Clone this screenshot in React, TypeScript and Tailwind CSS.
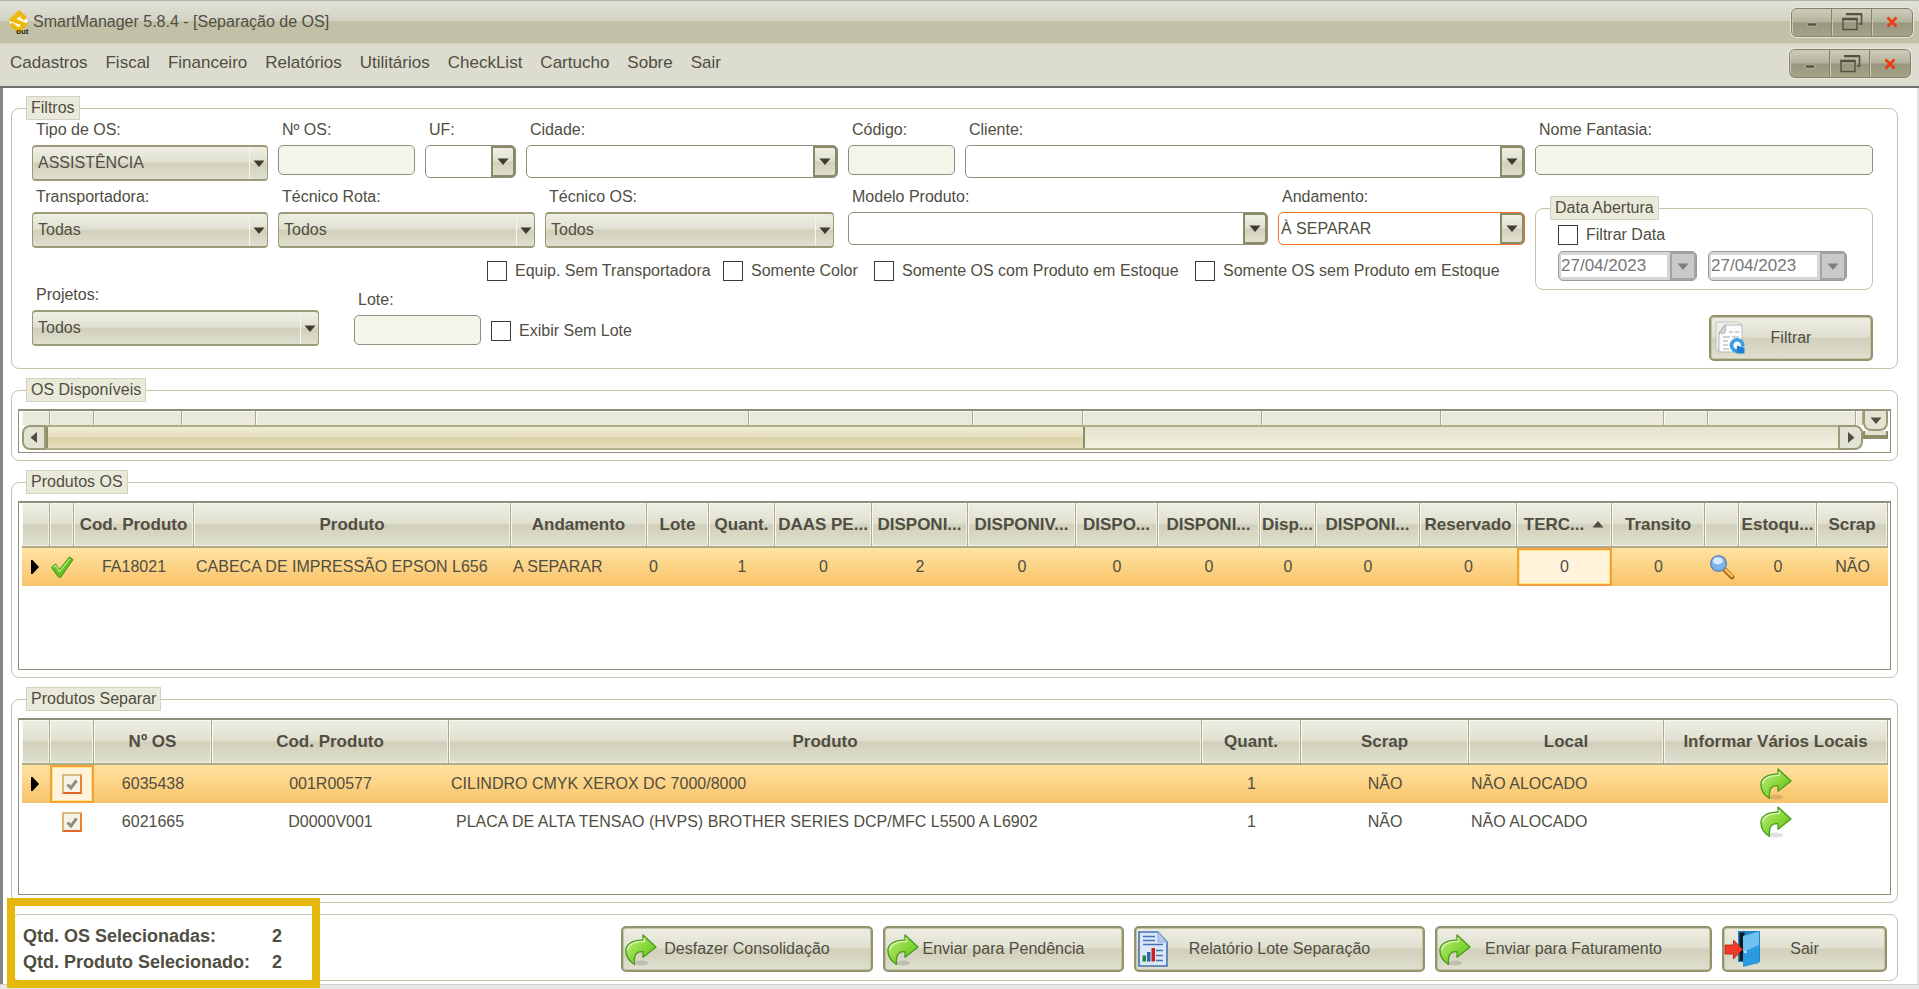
import { useId, useState } from "react";
import type { ReactNode } from "react";

const MENU = ["Cadastros", "Fiscal", "Financeiro", "Relatórios", "Utilitários", "CheckList", "Cartucho", "Sobre", "Sair"];

const FACE = "bg-[linear-gradient(180deg,#eeeee3_0%,#e1e1d2_46%,#d0d0bb_52%,#e0e0d0_100%)]";
const HEAD_CELL = `${FACE} border-r border-b-2 border-[#adab88] p-0 text-[17px] font-bold shadow-[inset_1px_1px_0_#f8f8f2,inset_-1px_-1px_0_#f0f0e6] whitespace-nowrap overflow-hidden`;
const SELECTED_ROW = "bg-[linear-gradient(180deg,#ffe3a3_0%,#fcd182_55%,#f8c46a_100%)]";
const ACTIVE_CELL = "bg-[#fff3dc] shadow-[inset_0_0_0_2px_#f3a03c,inset_0_0_0_3px_#ffe680]";

function Caret({ className = "" }: { className?: string }) {
  return (
    <svg viewBox="0 0 12 7" className={`w-3 h-[7px] ${className}`} fill="currentColor">
      <path d="M0.5 0.5h11L6 7z" />
    </svg>
  );
}

function GreenArrow({ className = "" }: { className?: string }) {
  const id = useId();
  return (
    <svg viewBox="0 0 32 32" className={`w-8 h-8 ${className}`}>
      <defs>
        <linearGradient id={id} x1="0" y1="0" x2="1" y2="1">
          <stop offset="0" stopColor="#c9f08c" />
          <stop offset="0.5" stopColor="#8ad83c" />
          <stop offset="1" stopColor="#58b81c" />
        </linearGradient>
      </defs>
      <ellipse cx="16" cy="29" rx="7" ry="2.4" fill="#000" opacity="0.12" />
      <path
        d="M18 1 31 13 18 23.3V17.6C11.4 17 8.6 20.8 9.5 30.5 4 27 .9 22 .9 16.6.9 9.8 8 5.9 18 6.2Z"
        fill={`url(#${id})`}
        stroke="#4a9a1c"
        strokeWidth="1.3"
        strokeLinejoin="round"
      />
      <path d="M19.2 3.8v3.8C10 7.2 3 10.5 2.6 16" fill="none" stroke="#e6fac8" strokeWidth="1.1" />
    </svg>
  );
}

function ReportIcon({ className = "" }: { className?: string }) {
  return (
    <svg viewBox="0 0 30 36" className={`w-[30px] h-9 ${className}`}>
      <path d="M1 1h19l9 10v24H1z" fill="#dbe7f6" stroke="#4673b4" strokeWidth="1.6" />
      <path d="M20 1v10h9z" fill="#b4cbea" stroke="#7fa2d2" strokeWidth="0.8" />
      <path d="M5 5.500h12M5 9.500h12M5 13.500h20M18 19.500h7M18 24.500h7M18 29.500h7" stroke="#4673b4" strokeWidth="1.6" />
      <path d="M4.500 24.500h3.500v6H4.500z" fill="#1f8a2b" />
      <path d="M9 21h3.500v9.500H9z" fill="#2f63b4" />
      <path d="M13.500 17h3.500v13.500h-3.500z" fill="#cf2020" />
    </svg>
  );
}

function DoorIcon({ className = "" }: { className?: string }) {
  return (
    <svg viewBox="0 0 37 38" className={`w-[37px] h-[38px] ${className}`}>
      <path d="M14 1h22v31H14z" fill="#1f86c8" />
      <path d="M15.500 2.500h5V31h-5z" fill="#101820" />
      <path d="M19 6 35 1.500V33L19 37z" fill="#2b9be0" />
      <path d="M19 6 35 1.500V15L19 22z" fill="#6fc0ef" />
      <circle cx="21.500" cy="22" r="1.2" fill="#eaf6ff" />
      <path d="M1 15h8.500V10L18.500 19.500 9.500 29v-5H1z" fill="#f23a28" stroke="#b81d12" strokeWidth="0.8" />
    </svg>
  );
}

function FilterIcon({ className = "" }: { className?: string }) {
  return (
    <svg viewBox="0 0 30 33" className={`w-[30px] h-[33px] ${className}`}>
      <path d="M1 1h22l3 2v26H1z" fill="#ededed" stroke="#bdbdbd" strokeWidth="0.8" />
      <path d="M10 4h17v27H4V12z" fill="#fbfbfb" stroke="#b5b5b5" />
      <path d="M10 4c1 3 1 6-.5 8-1.500.5-3.500.3-5.500 0z" fill="#d6d6d6" stroke="#9c9c9c" strokeWidth="0.8" />
      <path d="M14 11h4M20 11h4M8 16h7M17 16h7M8 20h5M8 24h5M8 28h6" stroke="#c4c4c4" strokeWidth="1.3" />
      <path d="M23.500 29.800A5.600 5.600 0 1 1 27.600 25.500" fill="none" stroke="#3a9de6" strokeWidth="3.6" />
      <path d="M22 24.500 29.500 27V32.500H21.500z" fill="#1f7fd0" />
    </svg>
  );
}

function CheckMark() {
  return (
    <svg viewBox="0 0 24 24" className="w-6 h-6 mx-auto">
      <path d="M1.500 12.500 5.500 9l4 5.500L19.500 2l3.500 2.500L10.500 22.500 8.500 22z" fill="#63c224" stroke="#3d8f14" strokeLinejoin="round" />
      <path d="M3.500 12 5.500 10.700l4 6L20 3.500" fill="none" stroke="#b5f07a" strokeWidth="1.2" />
    </svg>
  );
}

function Magnifier() {
  return (
    <svg viewBox="0 0 26 26" className="w-[26px] h-[26px] mx-auto">
      <path d="M14.500 14.500 23 23" stroke="#a8641c" strokeWidth="4.6" strokeLinecap="round" />
      <path d="M16.500 15.800 23 22.200" stroke="#f6c25a" strokeWidth="2.4" strokeLinecap="round" />
      <circle cx="9.500" cy="9.500" r="7.8" fill="#7db4ef" stroke="#6c87b8" strokeWidth="1.6" />
      <ellipse cx="8.800" cy="6.800" rx="5" ry="3.6" fill="#d9ecff" />
    </svg>
  );
}

function AppLogo() {
  return (
    <svg viewBox="0 0 22 24" className="w-[22px] h-6">
      <path d="M11 1 20 11 11 23 1 12z" fill="#fffbe6" />
      <path d="M11 0 19 7 16 10.500 11.500 6.500 8.500 9 20 14 11 23.500 1.500 15.500 4.500 12.500 10.500 17.500 13 15 0 10.500z" fill="#edb90f" />
      <text x="8" y="23.500" fontSize="8" fontWeight="700" fill="#2a2410" fontFamily="Liberation Sans, sans-serif">out</text>
    </svg>
  );
}

function WindowButtons({ target }: { target: string }) {
  const btn = "flex items-center justify-center w-10 h-[27px] border-r border-[#85836a] last:border-r-0 shadow-[inset_1px_1px_0_#c9c8b4]";
  return (
    <div className="flex rounded-md overflow-hidden border border-[#85836a] ring-1 ring-[#e6e6da] bg-[linear-gradient(180deg,#cfcebf_0%,#b3b29b_48%,#98967c_52%,#a5a388_100%)]">
      <button type="button" aria-label={`Minimizar ${target}`} className={btn}>
        <svg viewBox="0 0 10 10" className="w-2.5 h-2.5"><path d="M0.500 6h9v3h-9z" fill="#54523f" stroke="#d5d4c3" strokeWidth="0.5" /></svg>
      </button>
      <button type="button" aria-label={`Restaurar ${target}`} className={btn}>
        <svg viewBox="0 0 22 20" className="w-[22px] h-5" fill="none" stroke="#54523f">
          <path d="M5 2.500h15.500V12H18" strokeWidth="1.6" />
          <path d="M5 2h16" strokeWidth="2.2" />
          <path d="M2 7h14v10.500H2z" strokeWidth="1.4" />
          <path d="M1.300 7h15.400" strokeWidth="2.6" />
        </svg>
      </button>
      <button type="button" aria-label={`Fechar ${target}`} className={btn}>
        <svg viewBox="0 0 12 12" className="w-3 h-3"><path d="M1.500 1.500 10.500 10.500M10.500 1.500 1.500 10.500" stroke="#ee3a10" strokeWidth="2.6" /></svg>
      </button>
    </div>
  );
}

function Group({ title, className = "", legendClass = "ml-3.5", children }: { title?: string; className?: string; legendClass?: string; children: ReactNode }) {
  return (
    <fieldset className={`min-w-0 border border-[#c6c5ab] rounded-lg ${className}`}>
      {title && (
        <legend className={`h-6 px-1 leading-[21px] bg-[#eaeadb] border border-[#d3d2bd] ${legendClass}`}>{title}</legend>
      )}
      {children}
    </fieldset>
  );
}

interface FieldProps {
  label: string;
  className?: string;
  options?: string[];
  active?: boolean;
}

function TextField({ label, className = "" }: FieldProps) {
  const id = useId();
  return (
    <div className={className}>
      <label htmlFor={id} className="block h-5 mb-[5px] pl-1 leading-5">{label}</label>
      <input id={id} type="text" className="block w-full h-[30px] px-1 rounded-[5px] border border-[#8f8e7a] bg-[#f5f5ec]" />
    </div>
  );
}

// flat drop-down list
function DropDown({ label, className = "", options = [] }: FieldProps) {
  const id = useId();
  return (
    <div className={className}>
      <label htmlFor={id} className="block h-5 mb-[5px] pl-1 leading-5">{label}</label>
      <div className="relative">
        <select id={id} className={`block w-full h-9 pl-[5px] pr-6 appearance-none rounded-[4px] border border-y-2 border-[#9c9a76] ${FACE}`}>
          {options.map(o => <option key={o}>{o}</option>)}
        </select>
        <span className="absolute right-px inset-y-0.5 w-[18px] flex items-center justify-center border-l border-[#f6f6ee] pointer-events-none">
          <Caret className="text-[#3e3c2c]" />
        </span>
      </div>
    </div>
  );
}

// editable style combo with a raised button at the right
function Combo({ label, className = "", options = [""], active = false }: FieldProps) {
  const id = useId();
  return (
    <div className={className}>
      <label htmlFor={id} className="block h-5 mb-[5px] pl-1 leading-5">{label}</label>
      <div className="relative">
        <select
          id={id}
          className={`block w-full h-[33px] pl-0.5 pr-7 appearance-none rounded-[5px] border bg-white ${active ? "border-[#e8742c]" : "border-[#8f8e7a]"}`}
        >
          {options.map(o => <option key={o}>{o}</option>)}
        </select>
        <span className={`absolute right-px inset-y-px w-6 flex items-center justify-center rounded-r border-2 border-[#8b8a66] pointer-events-none ${FACE}`}>
          <Caret className="text-[#3e3c2c]" />
        </span>
      </div>
    </div>
  );
}

function CheckField({ label, className = "" }: { label: string; className?: string }) {
  return (
    <label className={`flex items-center gap-2 h-5 whitespace-nowrap ${className}`}>
      <input type="checkbox" className="w-5 h-5 shrink-0 appearance-none border border-[#3a3a3a] bg-white checked:bg-[#8b8a66]" />
      {label}
    </label>
  );
}

function DateField({ label }: { label: string }) {
  return (
    <div className="flex w-[139px] h-[30px] rounded-[5px] border border-[#9b9b9b] bg-[#d6d6d6] overflow-hidden">
      <input type="text" aria-label={label} disabled defaultValue="27/04/2023" className="min-w-0 flex-1 my-[3px] ml-0.5 mr-[3px] bg-white text-[17px] text-[#77777a]" />
      <button type="button" aria-label={`Abrir ${label}`} disabled className="w-[26px] flex items-center justify-center border-2 border-[#a3a3a3] bg-[#c9c9c9]">
        <Caret className="text-[#808080]" />
      </button>
    </div>
  );
}

function ActionButton({ className = "", icon, children }: { className?: string; icon: ReactNode; children: ReactNode }) {
  return (
    <button type="button" className={`relative h-[46px] rounded-[5px] border-2 border-[#93926c] shadow-[inset_0_0_0_1px_#c6c5a4] text-center ${FACE} ${className}`}>
      {icon}
      {children}
    </button>
  );
}

function GridCheck({ label }: { label: string }) {
  const [checked, setChecked] = useState(true);
  return (
    <span className="relative block w-5 h-5 mx-auto">
      <input
        type="checkbox"
        aria-label={label}
        checked={checked}
        onChange={e => setChecked(e.target.checked)}
        className="block w-5 h-5 appearance-none border-2 border-t-[#d9bd84] border-l-[#dcb676] border-r-[#e88430] border-b-[#e0662a] bg-[#f6f3e4]"
      />
      {checked && (
        <svg viewBox="0 0 20 20" className="absolute inset-0 w-5 h-5 pointer-events-none">
          <path d="M5.500 10.500 9 14l5.500-7.500" fill="none" stroke="#8e8e84" strokeWidth="3" />
        </svg>
      )}
    </span>
  );
}

function RowMarker() {
  return (
    <svg viewBox="0 0 8 14" className="w-2 h-3.5 ml-[9px]"><path d="M0 0h1.500L8 7 1.500 14H0z" fill="#000" /></svg>
  );
}

const OS_COLS = [
  { head: "", width: "w-7" },
  { head: "", width: "w-6" },
  { head: "Cod. Produto", width: "w-[120px]" },
  { head: "Produto", width: "" },
  { head: "Andamento", width: "w-[136px]" },
  { head: "Lote", width: "w-[62px]" },
  { head: "Quant.", width: "w-[66px]" },
  { head: "DAAS PE...", width: "w-[97px]" },
  { head: "DISPONI...", width: "w-24" },
  { head: "DISPONIV...", width: "w-[108px]" },
  { head: "DISPO...", width: "w-[82px]" },
  { head: "DISPONI...", width: "w-[102px]" },
  { head: "Disp...", width: "w-14" },
  { head: "DISPONI...", width: "w-[104px]" },
  { head: "Reservado", width: "w-[97px]" },
  { head: "TERC...", width: "w-[95px]", sorted: true },
  { head: "Transito", width: "w-[93px]" },
  { head: "", width: "w-[34px]" },
  { head: "Estoqu...", width: "w-[78px]" },
  { head: "Scrap", width: "w-[71px]" },
];

const SEPARAR_COLS = [
  { head: "", width: "w-7" },
  { head: "", width: "w-11" },
  { head: "Nº OS", width: "w-[118px]" },
  { head: "Cod. Produto", width: "w-[237px]" },
  { head: "Produto", width: "" },
  { head: "Quant.", width: "w-[99px]" },
  { head: "Scrap", width: "w-[168px]" },
  { head: "Local", width: "w-[195px]" },
  { head: "Informar Vários Locais", width: "w-[224px]" },
];

const SEPARAR_ROWS = [
  { os: "6035438", cod: "001R00577", produto: "CILINDRO CMYK XEROX DC 7000/8000", selected: true },
  { os: "6021665", cod: "D0000V001", produto: "PLACA DE ALTA TENSAO (HVPS) BROTHER SERIES DCP/MFC L5500 A L6902", selected: false },
];

const DISPONIVEIS_COLS = ["w-7", "w-11", "w-[88px]", "w-[74px]", "", "w-[224px]", "w-[110px]", "w-[179px]", "w-[179px]", "w-[223px]", "w-11", "w-[148px]", "w-[7px]"];

const GRID_BOX = "border border-t-2 border-[#8f8e76] pl-[3px] pr-0.5 bg-white";

function ProdutosOs() {
  return (
    <div className={`${GRID_BOX} min-h-[169px]`}>
      <table className="w-full table-fixed border-separate border-spacing-0">
        <thead>
          <tr className="h-[45px]">
            {OS_COLS.map((c, i) => (
              <th key={i} className={`${HEAD_CELL} ${c.width}`}>
                {c.sorted ? (
                  <span className="flex items-center justify-center gap-2">
                    {c.head}
                    <Caret className="rotate-180" />
                  </span>
                ) : c.head}
              </th>
            ))}
          </tr>
        </thead>
        <tbody>
          <tr className={`h-[38px] text-center whitespace-nowrap ${SELECTED_ROW}`}>
            <td><RowMarker /></td>
            <td><CheckMark /></td>
            <td>FA18021</td>
            <td className="pl-0.5 text-left">CABECA DE IMPRESSÃO EPSON L656</td>
            <td className="pl-0.5 text-left">A SEPARAR</td>
            <td className="pl-0.5 text-left">0</td>
            <td>1</td>
            <td>0</td>
            <td>2</td>
            <td>0</td>
            <td>0</td>
            <td>0</td>
            <td>0</td>
            <td>0</td>
            <td>0</td>
            <td className={ACTIVE_CELL}>0</td>
            <td>0</td>
            <td><Magnifier /></td>
            <td>0</td>
            <td>NÃO</td>
          </tr>
        </tbody>
      </table>
    </div>
  );
}

function ProdutosSeparar() {
  return (
    <div className={`${GRID_BOX} min-h-[177px]`}>
      <table className="w-full table-fixed border-separate border-spacing-0">
        <thead>
          <tr className="h-[45px]">
            {SEPARAR_COLS.map((c, i) => <th key={i} className={`${HEAD_CELL} ${c.width}`}>{c.head}</th>)}
          </tr>
        </thead>
        <tbody>
          {SEPARAR_ROWS.map(r => (
            <tr key={r.os} className={`h-[38px] text-center whitespace-nowrap ${r.selected ? SELECTED_ROW : ""}`}>
              <td>{r.selected && <RowMarker />}</td>
              <td className={r.selected ? ACTIVE_CELL : ""}><GridCheck label={`Selecionar ${r.os}`} /></td>
              <td>{r.os}</td>
              <td>{r.cod}</td>
              <td className={`text-left ${r.selected ? "pl-0.5" : "pl-[7px]"}`}>{r.produto}</td>
              <td>1</td>
              <td>NÃO</td>
              <td className="pl-0.5 text-left">NÃO ALOCADO</td>
              <td>
                <button type="button" aria-label={`Informar vários locais ${r.os}`} className="block mx-auto"><GreenArrow /></button>
              </td>
            </tr>
          ))}
        </tbody>
      </table>
    </div>
  );
}

function OsDisponiveis() {
  const btn = "flex items-center justify-center border-2 border-[#9c9a76] bg-[#e3e3d3]";
  return (
    <div className={`${GRID_BOX} flex h-11`}>
      <div className="min-w-0 flex-1">
        <table className="w-full table-fixed border-separate border-spacing-0">
          <tbody>
            <tr className="h-3.5">
              {DISPONIVEIS_COLS.map((w, i) => (
                <td key={i} className={`p-0 bg-[#e9e9dc] border-r border-[#adab88] shadow-[inset_1px_1px_0_#f8f8f2] ${w}`} />
              ))}
            </tr>
          </tbody>
        </table>
        <div className="flex h-[25px]">
          <button type="button" aria-label="Rolar para a esquerda" className={`${btn} w-6 rounded-l-lg`}>
            <Caret className="rotate-90" />
          </button>
          <div className="flex-1 border-y-2 border-[#b0ae86] bg-[linear-gradient(180deg,#e3e3ce_0%,#f1f1df_100%)]">
            <div className="w-[58%] h-full border-x-2 border-[#8f8d65] bg-[linear-gradient(180deg,#efecd5_0%,#e6e0bf_45%,#dad1a6_52%,#e6dfc0_100%)]" />
          </div>
          <button type="button" aria-label="Rolar para a direita" className={`${btn} w-[25px] rounded-r-lg`}>
            <Caret className="-rotate-90" />
          </button>
        </div>
      </div>
      <div className="w-[25px]">
        <button type="button" aria-label="Rolar para baixo" className={`${btn} w-full h-5 rounded-b-lg border-t-0`}>
          <Caret />
        </button>
        <div className="h-2 border-x-2 border-b-4 border-[#8f8d65] bg-[#e3e3d3]" />
      </div>
    </div>
  );
}

function Filtros() {
  return (
    <Group title="Filtros" className="pb-[7px]">
      <div className="flex gap-2.5 pl-5 pr-6">
        <div className="min-w-0 flex-1">
          <div className="flex items-start gap-2.5">
            <DropDown label="Tipo de OS:" options={["ASSISTÊNCIA"]} className="w-[236px]" />
            <TextField label="Nº OS:" className="w-[137px]" />
            <Combo label="UF:" className="w-[91px]" />
            <Combo label="Cidade:" className="w-[312px]" />
            <TextField label="Código:" className="w-[107px]" />
            <Combo label="Cliente:" className="min-w-0 flex-1" />
          </div>
          <div className="flex items-start gap-2.5 mt-1.5">
            <DropDown label="Transportadora:" options={["Todas"]} className="w-[236px]" />
            <DropDown label="Técnico Rota:" options={["Todos"]} className="w-[257px]" />
            <DropDown label="Técnico OS:" options={["Todos"]} className="w-[289px] mr-1" />
            <Combo label="Modelo Produto:" className="min-w-0 flex-1" />
            <Combo label="Andamento:" options={["À SEPARAR"]} active className="w-[247px]" />
          </div>
          <div className="flex mt-[13px] pl-[455px]">
            <CheckField label="Equip. Sem Transportadora" className="w-[236px]" />
            <CheckField label="Somente Color" className="w-[151px]" />
            <CheckField label="Somente OS com Produto em Estoque" className="w-[321px]" />
            <CheckField label="Somente OS sem Produto em Estoque" />
          </div>
          <div className="flex items-start mt-1">
            <DropDown label="Projetos:" options={["Todos"]} className="w-[287px]" />
            <TextField label="Lote:" className="w-[127px] ml-[35px] mt-[5px]" />
            <CheckField label="Exibir Sem Lote" className="ml-2.5 mt-9" />
          </div>
        </div>
        <div className="w-[338px] flex flex-col">
          <TextField label="Nome Fantasia:" />
          <Group title="Data Abertura" className="mt-[21px] pl-[22px] pb-2" legendClass="-ml-2">
            <CheckField label="Filtrar Data" className="mt-[5px]" />
            <div className="flex gap-[11px] mt-1.5">
              <DateField label="Data inicial" />
              <DateField label="Data final" />
            </div>
          </Group>
          <ActionButton className="w-[164px] mt-[25px] self-end" icon={<FilterIcon className="absolute left-1 top-1" />}>Filtrar</ActionButton>
        </div>
      </div>
    </Group>
  );
}

export default function App() {
  return (
    <div className="min-h-screen flex flex-col bg-[#e9e9e9] font-['Liberation_Sans',Arial,sans-serif] text-[16px] leading-5 text-[#504e42]">
      <header className="flex items-center gap-[3px] h-[43px] pl-2 pr-1.5 border-t border-[#b4b4ac] bg-[linear-gradient(180deg,#e1e1d6_0%,#d3d3c5_47%,#c2c1a8_49%,#c2c1a8_100%)]">
        <AppLogo />
        <h1 className="flex-1">SmartManager 5.8.4 - [Separação de OS]</h1>
        <WindowButtons target="janela" />
      </header>
      <div className="flex items-start justify-between h-[45px] pl-2.5 pr-2 pt-[5px] border-t border-b-2 border-t-[#d2d1bd] border-b-[#6f7070] bg-[#dcddcf]">
        <nav className="flex gap-[18px] pt-0.5 text-[17px]">
          {MENU.map(m => <a key={m} href="#" className="leading-6">{m}</a>)}
        </nav>
        <WindowButtons target="formulário" />
      </div>
      <main className="flex-1 pt-2 pb-[3px] pl-2 pr-[19px] border-l-[3px] border-l-[#858585] border-r-2 border-r-[#e4e4e4] bg-white">
        <Filtros />
        <Group title="OS Disponíveis" className="mt-[9px] pt-[7px] px-1.5 pb-[7px]" legendClass="ml-2">
          <OsDisponiveis />
        </Group>
        <Group title="Produtos OS" className="mt-[9px] pt-[7px] px-1.5 pb-[7px]" legendClass="ml-2">
          <ProdutosOs />
        </Group>
        <Group title="Produtos Separar" className="mt-[9px] pt-[7px] px-1.5 pb-[7px]" legendClass="ml-2">
          <ProdutosSeparar />
        </Group>
        <div className="relative flex items-center justify-between mt-[11px] h-[67px] pl-[11px] pr-2.5 pt-0.5 border border-[#c6c5ab] rounded-lg">
          <dl className="grid grid-cols-[249px_auto] gap-y-1.5 text-[18px] font-bold">
            <dt>Qtd. OS Selecionadas:</dt>
            <dd>2</dd>
            <dt>Qtd. Produto Selecionado:</dt>
            <dd>2</dd>
          </dl>
          <div className="flex gap-2.5">
            <ActionButton className="w-[252px]" icon={<GreenArrow className="absolute left-0.5 top-1.5" />}>Desfazer Consolidação</ActionButton>
            <ActionButton className="w-[241px]" icon={<GreenArrow className="absolute left-0.5 top-1.5" />}>Enviar para Pendência</ActionButton>
            <ActionButton className="w-[291px]" icon={<ReportIcon className="absolute left-0.5 top-[3px]" />}>Relatório Lote Separação</ActionButton>
            <ActionButton className="w-[277px]" icon={<GreenArrow className="absolute left-0.5 top-1.5" />}>Enviar para Faturamento</ActionButton>
            <ActionButton className="w-[165px]" icon={<DoorIcon className="absolute left-0 top-0.5" />}>Sair</ActionButton>
          </div>
          {/* highlight frame around the totals */}
          <div className="absolute -left-[5px] -top-[17px] w-[313px] h-[90px] border-8 border-[#e6b80b] pointer-events-none" />
        </div>
      </main>
      <footer className="h-[5px] border-t border-[#cfcfcf] bg-[#e6e6e6]" />
    </div>
  );
}
